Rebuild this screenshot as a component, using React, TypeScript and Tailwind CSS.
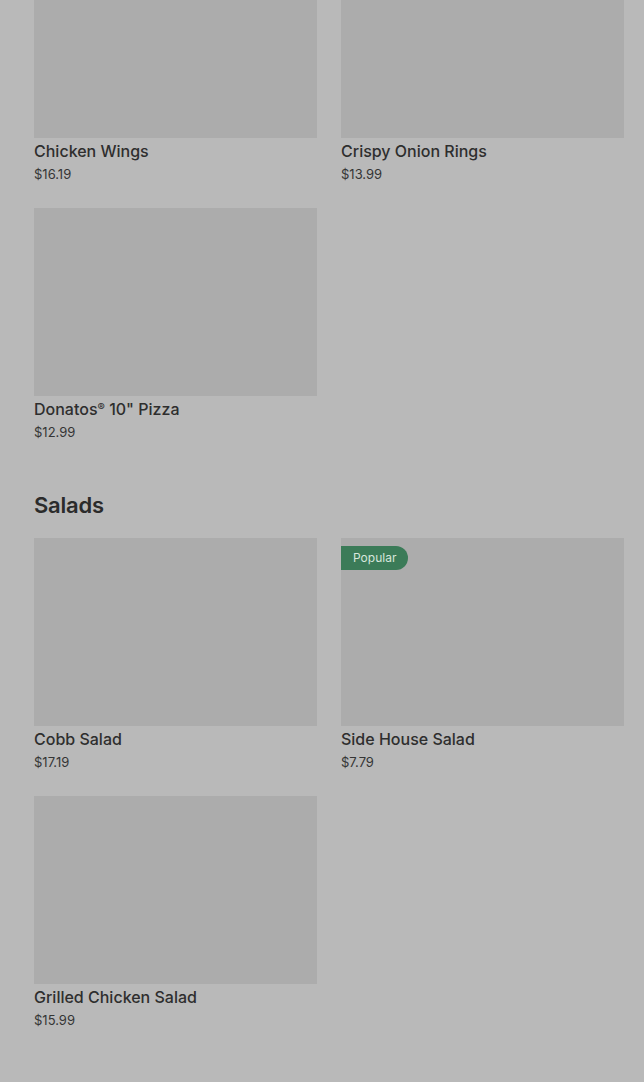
const sections = [
  {
    title: null as string | null,
    items: [
      { name: 'Chicken Wings', price: '$16.19' },
      { name: 'Crispy Onion Rings', price: '$13.99' },
      { name: 'Donatos® 10" Pizza', price: '$12.99' },
    ],
  },
  {
    title: 'Salads',
    items: [
      { name: 'Cobb Salad', price: '$17.19' },
      { name: 'Side House Salad', price: '$7.79', badge: 'Popular' },
      { name: 'Grilled Chicken Salad', price: '$15.99' },
    ],
  },
]

type Item = { name: string; price: string; badge?: string }

// render ® smaller and raised, like the menu does
const ItemName = ({ name }: { name: string }) => {
  const parts = name.split('®')
  return (
    <>
      {parts.map((p, i) => (
        <span key={i}>
          {p}
          {i < parts.length - 1 && <span className="relative -top-[4px] text-[11px] leading-none">®</span>}
        </span>
      ))}
    </>
  )
}

const MenuCard = ({ item }: { item: Item }) => (
  <div className="flex flex-col">
    <div className="relative h-[188px] bg-[#acacac]">
      {item.badge && (
        <span className="absolute left-0 top-[8px] h-[24px] pl-[12px] pr-[12px] flex items-center rounded-r-full bg-[#3b7b58] text-[12px] text-[#d7e6dc]">
          {item.badge}
        </span>
      )}
    </div>
    <div className="mt-[2px] h-[22px] text-[16px] leading-[22px] font-medium text-[#2e2e2e]">
      <ItemName name={item.name} />
    </div>
    <div className="mt-[2px] text-[13px] leading-[20px] text-[#353535]">{item.price}</div>
  </div>
)

export default function App() {
  return (
    <div
      className="min-h-[1082px] bg-[#b9b9b9] pl-[34px] pr-[20px] overflow-hidden"
      style={{ fontFamily: 'Inter, "Noto Sans", sans-serif' }}
    >
      <div className="-mt-[50px] flex flex-col">
        {sections.map((section, i) => (
          <div key={i} className={i > 0 ? 'mt-[49px]' : ''}>
            {section.title && (
              <h2 className="text-[22px] leading-[28px] font-semibold text-[#2b2b2b] mb-[19px] tracking-[-0.2px]">
                {section.title}
              </h2>
            )}
            <div className="grid grid-cols-2 gap-x-[24px] gap-y-[24px]">
              {section.items.map((item) => (
                <MenuCard key={item.name} item={item} />
              ))}
            </div>
          </div>
        ))}
      </div>
    </div>
  )
}
